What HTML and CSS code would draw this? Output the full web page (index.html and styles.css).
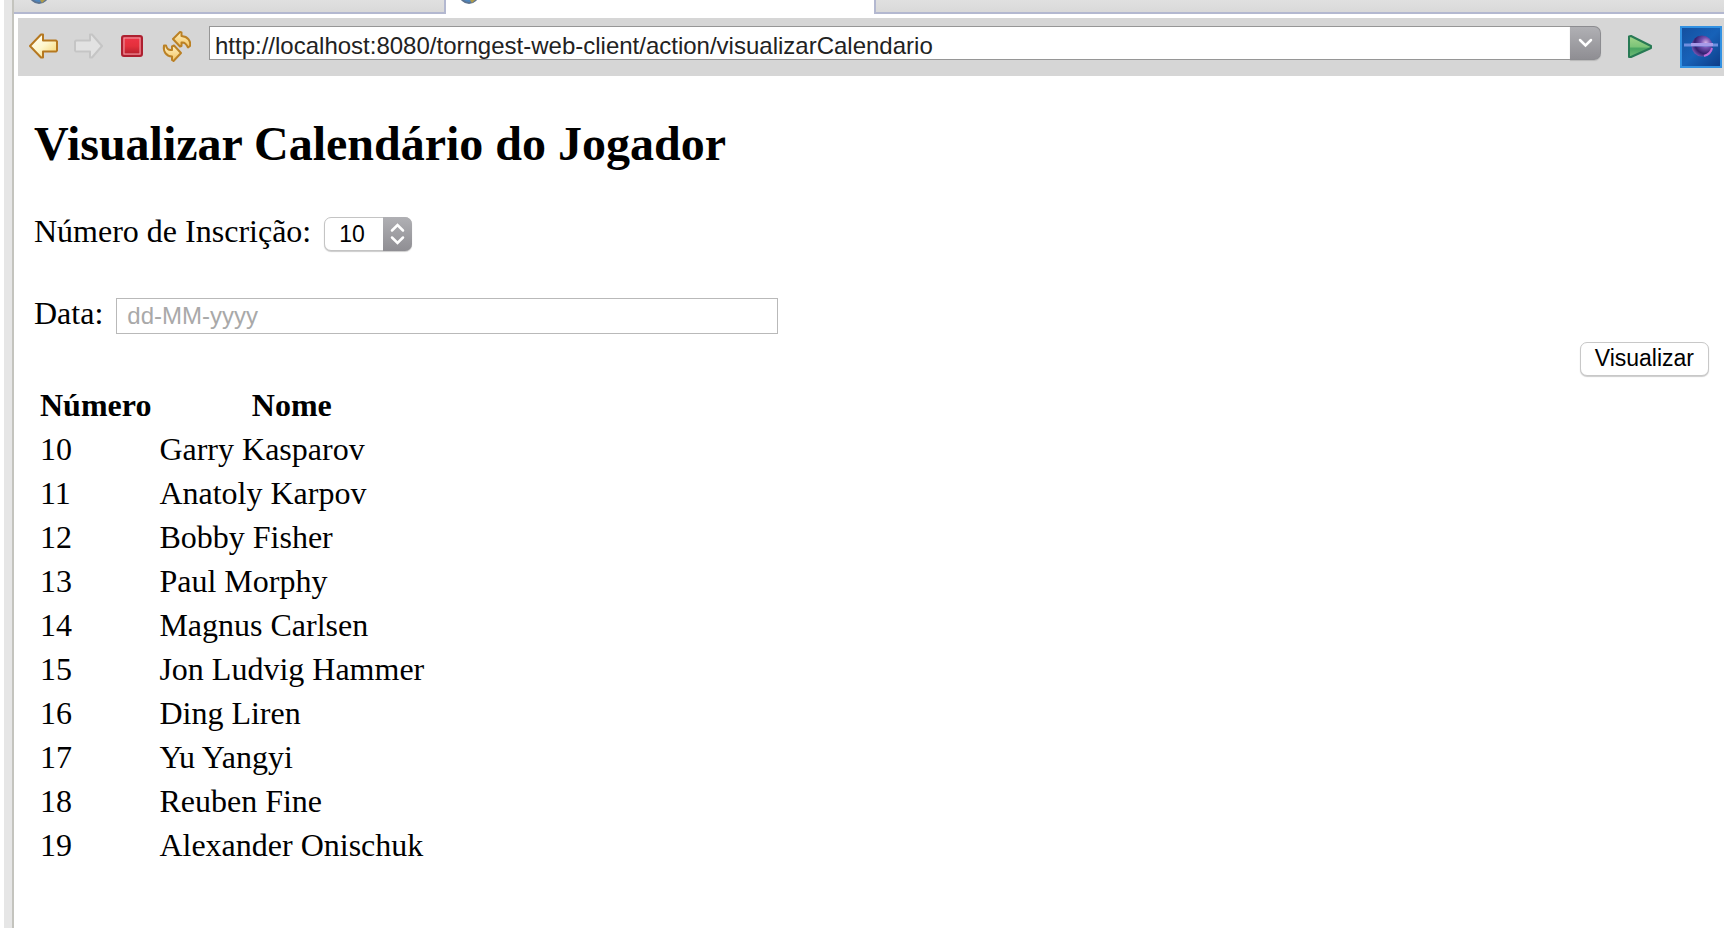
FILE: index.html
```html
<!DOCTYPE html>
<html lang="pt">
<head>
<meta charset="utf-8">
<title>Visualizar Calendário do Jogador</title>
<link rel="stylesheet" href="styles.css">
</head>
<body>
<div class="window">
  <div class="tabs">
    <div class="tab tab-first">
      <svg class="globe" viewBox="0 0 20 20" aria-hidden="true"><circle cx="10" cy="10" r="9" fill="#4f86bd" stroke="#5c7390" stroke-width="2"/><path d="M11 11l5 0 1 4-4 4-2-3z" fill="#b09b4a"/></svg>
    </div>
    <div class="tab tab-active">
      <svg class="globe" viewBox="0 0 20 20" aria-hidden="true"><circle cx="10" cy="10" r="9" fill="#4f86bd" stroke="#5c7390" stroke-width="2"/><path d="M11 11l5 0 1 4-4 4-2-3z" fill="#b09b4a"/></svg>
    </div>
    <div class="tab tab-rest"></div>
  </div>

  <div class="toolbar">
    <svg class="defs" aria-hidden="true">
      <defs>
        <linearGradient id="gold" x1="0" y1="0" x2="1" y2="1"><stop offset="0" stop-color="#fff"/><stop offset=".5" stop-color="#fdf6cc"/><stop offset="1" stop-color="#f5cf60"/></linearGradient>
        <linearGradient id="curl" x1="0" y1="0" x2="0" y2="1"><stop offset="0" stop-color="#fff0c0"/><stop offset="1" stop-color="#f3c462"/></linearGradient>
        <linearGradient id="red" x1="0" y1="0" x2="0" y2="1"><stop offset="0" stop-color="#ee3446"/><stop offset=".5" stop-color="#e4303c"/><stop offset="1" stop-color="#b8202e"/></linearGradient>
        <linearGradient id="green" x1="0" y1="0" x2="0" y2="1"><stop offset="0" stop-color="#a4d68c"/><stop offset=".5" stop-color="#7cc478"/><stop offset=".6" stop-color="#4aa662"/><stop offset="1" stop-color="#70bc76"/></linearGradient>
        <linearGradient id="blue" x1="0" y1="0" x2="1" y2="1"><stop offset="0" stop-color="#1550a0"/><stop offset=".5" stop-color="#1762b8"/><stop offset="1" stop-color="#0e3c88"/></linearGradient>
        <radialGradient id="orb" cx=".68" cy=".35" r=".7"><stop offset="0" stop-color="#d6b4e8"/><stop offset=".35" stop-color="#7450b0"/><stop offset=".75" stop-color="#332070"/><stop offset="1" stop-color="#6c50ac"/></radialGradient>
      </defs>
    </svg>
    <div class="nav">
      <button class="tool" type="button" aria-label="Voltar"><svg viewBox="0 0 30 30"><path d="M1 14 12 2.500H14V8.500H27L28 9.500V18.500L27 19.500H14V25.500H12Z" fill="url(#gold)" stroke="#b57820" stroke-width="2" stroke-linejoin="round"/></svg></button>
      <button class="tool" type="button" aria-label="Avançar" disabled><svg viewBox="0 0 30 30"><path d="M29 14 19 2.500H17V8.500H3L2 9.500V18.500L3 19.500H17V25.500H19Z" fill="#e2e2e2" stroke="#c5c5c5" stroke-width="2" stroke-linejoin="round"/></svg></button>
      <button class="tool" type="button" aria-label="Parar"><svg viewBox="0 0 30 30"><rect x="5" y="4" width="20" height="20" rx="2" fill="#d9384a" stroke="#ad2030" stroke-width="2"/><rect x="7" y="6" width="16" height="16" fill="url(#red)" stroke="#f0a0a8" stroke-width="1"/></svg></button>
      <button class="tool" type="button" aria-label="Atualizar"><svg viewBox="0 0 30 32"><g fill="url(#curl)" stroke="#bb8125" stroke-width="2" stroke-linejoin="round"><path d="M12 8 19 1 20.500 1.500V5C27 5.500 30 10 29 15L27 16.500C25 12 23 11 20.500 11.500V15L19 15.500Z"/><path d="M20 22 12.500 30 11 29V25.500C5 25 2 20.500 3 14.500H5C6 18.500 8 19.500 11 19V15.500L13 14.500Z"/></g></svg></button>
    </div>
    <div class="address">
      <input class="url" type="text" aria-label="Endereço" value="http://localhost:8080/torngest-web-client/action/visualizarCalendario">
      <button class="drop" type="button" aria-label="Histórico"><svg viewBox="0 0 30 32"><path d="M10 13 15.500 18.500 21 13" fill="none" stroke="#fff" stroke-width="2.500" stroke-linecap="round"/></svg></button>
    </div>
    <button class="tool" type="button" aria-label="Ir"><svg viewBox="0 0 30 30"><path d="M5 4.500 7 4 27 14V16L7 25H5Z" fill="url(#green)" stroke="#287a54" stroke-width="2" stroke-linejoin="round"/></svg></button>
    <svg class="brand" viewBox="0 0 42 42" aria-hidden="true"><rect width="42" height="42" fill="#3291e2"/><rect x="2" y="2" width="38" height="38" fill="url(#blue)"/><circle cx="22" cy="20" r="10.500" fill="url(#orb)"/><path d="M4 19H38" stroke="#6f8fe0" stroke-width="3"/><path d="M11 18.500H33" stroke="#a79ae8" stroke-width="3"/><path d="M24 30Q31 28 32 22" fill="none" stroke="#c06ad8" stroke-width="2"/></svg>
  </div>

  <main class="page">
    <h1 class="title">Visualizar Calendário do Jogador</h1>
    <form class="form">
      <div class="field">
        <label for="numero">Número de Inscrição:</label>
        <span class="picker">
          <select class="select" id="numero">
            <option>10</option><option>11</option><option>12</option><option>13</option><option>14</option>
            <option>15</option><option>16</option><option>17</option><option>18</option><option>19</option>
          </select>
          <svg class="stepper" viewBox="0 0 29 34" aria-hidden="true"><path d="M9 13.500 14.500 8 20 13.500M9 20.500 14.500 26 20 20.500" fill="none" stroke="#fff" stroke-width="2.500" stroke-linecap="round"/></svg>
        </span>
      </div>
      <div class="field">
        <label for="data">Data:</label>
        <input class="date" id="data" type="text" placeholder="dd-MM-yyyy">
      </div>
      <button class="submit" type="submit">Visualizar</button>
    </form>
    <table class="players">
      <thead><tr><th>Número</th><th>Nome</th></tr></thead>
      <tbody>
        <tr><td>10</td><td>Garry Kasparov</td></tr>
        <tr><td>11</td><td>Anatoly Karpov</td></tr>
        <tr><td>12</td><td>Bobby Fisher</td></tr>
        <tr><td>13</td><td>Paul Morphy</td></tr>
        <tr><td>14</td><td>Magnus Carlsen</td></tr>
        <tr><td>15</td><td>Jon Ludvig Hammer</td></tr>
        <tr><td>16</td><td>Ding Liren</td></tr>
        <tr><td>17</td><td>Yu Yangyi</td></tr>
        <tr><td>18</td><td>Reuben Fine</td></tr>
        <tr><td>19</td><td>Alexander Onischuk</td></tr>
      </tbody>
    </table>
  </main>
</div>
</body>
</html>
```
FILE: styles.css
```css
* { box-sizing: border-box; }

body {
  margin: 0;
  padding-left: 4px;
  background: #fff;
  color: #000;
  font: 32px/36px "Liberation Serif", "Times New Roman", serif;
}

button, input, select {
  margin: 0;
  font-family: "Liberation Sans", Arial, sans-serif;
}

.window {
  min-height: 100vh;
  border-left: 8px solid #e6e6e6;
  box-shadow: inset 2px 0 #c4c4be;
  padding-left: 2px;
}

/* Editor tabs */
.tabs { display: flex; height: 14px; overflow: hidden; }
.tab {
  display: flex;
  align-items: flex-end;
  padding: 0 15px 8px;
  background: linear-gradient(#e0e0e0, #d9d9d9);
  border-bottom: 2px solid #b3b8d0;
}
.tab-first { width: 432px; border-right: 2px solid #b3b8d0; }
.tab-active { width: 428px; padding-left: 13px; background: #fff; border-bottom-color: #fff; }
.tab-rest { flex: 1; border-left: 2px solid #b3b8d0; }
.globe { flex: none; width: 20px; height: 20px; }

/* Browser toolbar */
.toolbar {
  display: flex;
  align-items: center;
  margin: 4px 0 0 4px;
  padding: 8px 2px 8px 11px;
  background: #d6d6d6;
}
.defs { position: absolute; width: 0; height: 0; }
.nav { display: flex; gap: 14px; }
.tool { width: 30px; height: 32px; padding: 0; border: 0; background: none; }
.tool svg { display: block; width: 100%; height: 100%; }
.address { display: flex; flex: 1; align-self: flex-start; height: 34px; margin: 0 23px 0 18px; }
.url {
  flex: 1;
  min-width: 0;
  padding: 5px 5px 0;
  border: 1px solid #969696;
  border-right: 0;
  background: #fff;
  color: #222;
  font-size: 24px;
}
.drop {
  width: 31px;
  padding: 0;
  border: 1px solid #8c8c90;
  border-left: 0;
  border-radius: 0 7px 7px 0;
  background: linear-gradient(#b0b0b4, #8f8e93);
  box-shadow: 0 1px 1px #b8b8b8;
}
.drop svg { display: block; width: 30px; height: 32px; }
.brand { flex: none; width: 42px; height: 42px; margin-left: 26px; }

/* Page */
.page { padding: 40px 15px 40px 20px; }
.title { margin: 0 0 41px; font-size: 48px; line-height: 56px; }
.form { display: flex; flex-direction: column; gap: 8px; }
.field { display: flex; align-items: baseline; gap: 13px; }
.field + .field { margin-top: 36px; }
.picker { display: grid; grid-template-columns: 59px 29px; }
.select {
  grid-area: 1 / 1 / 2 / 3;
  appearance: none;
  height: 34px;
  padding: 0 0 0 14px;
  border: 1px solid #c4c4c4;
  border-radius: 7px;
  background: #fff;
  box-shadow: 0 1px 1px #ccc;
  color: #000;
  font-size: 23px;
}
.stepper {
  grid-area: 1 / 2;
  z-index: 1;
  width: 29px;
  height: 34px;
  border-radius: 0 7px 7px 0;
  background: linear-gradient(#b0b0b4, #8f8e93);
  pointer-events: none;
}
.date {
  width: 662px;
  max-width: 100%;
  height: 36px;
  padding: 1px 10px 0;
  border: 1px solid #b9b9b9;
  background: #fff;
  font-size: 24px;
}
.date::placeholder { color: #a9a9a9; }
.submit {
  align-self: flex-end;
  height: 34px;
  padding: 0 14px;
  border: 1px solid #c8c8c8;
  border-radius: 7px;
  background: #fff;
  box-shadow: 0 1px 1px #ccc;
  color: #000;
  font-size: 23px;
}
.players { margin-top: 5px; border-spacing: 4px; }
.players th, .players td { padding: 2px; text-align: left; }
.players th { text-align: center; }
```
